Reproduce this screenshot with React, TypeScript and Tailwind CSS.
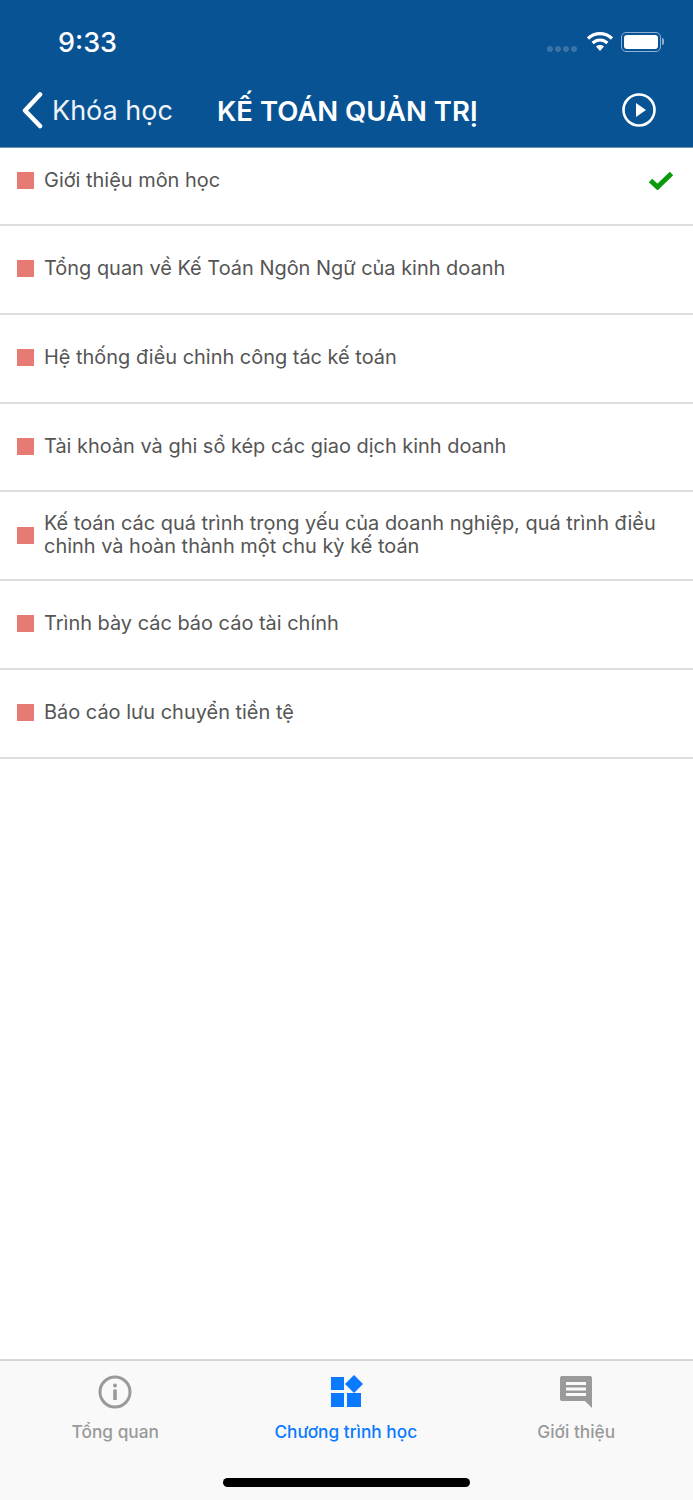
const lessons = [
  'Tổng quan về Kế Toán Ngôn Ngữ của kinh doanh',
  'Hệ thống điều chỉnh công tác kế toán',
  'Tài khoản và ghi sổ kép các giao dịch kinh doanh',
  'Kế toán các quá trình trọng yếu của doanh nghiệp, quá trình điều chỉnh và hoàn thành một chu kỳ kế toán',
  'Trình bày các báo cáo tài chính',
  'Báo cáo lưu chuyển tiền tệ',
];

function StatusIcons() {
  return (
    <div className="flex items-center -mt-[2px]">
      <div className="flex gap-[2px] mt-[15px] mr-[9px]">
        <span className="w-[6px] h-[6px] rounded-full bg-[#3d72a6]" />
        <span className="w-[6px] h-[6px] rounded-full bg-[#3d72a6]" />
        <span className="w-[6px] h-[6px] rounded-full bg-[#3d72a6]" />
        <span className="w-[6px] h-[6px] rounded-full bg-[#3d72a6]" />
      </div>
      <svg width="28" height="21" viewBox="0 0 28 21" className="mr-[7px]">
        <path d="M2 7.5C9 1 19 1 26 7.5" fill="none" stroke="#fff" strokeWidth="3.2" />
        <path d="M6.6 12C11 8 17 8 21.4 12" fill="none" stroke="#fff" strokeWidth="3.2" />
        <path d="M10 15.5C12.5 13.6 15.5 13.6 18 15.5L14 20Z" fill="#fff" />
      </svg>
      <div className="w-[40px] h-[20px] rounded-[5px] border border-[#8fb0d0] p-[2px]">
        <div className="w-full h-full rounded-[3px] bg-white" />
      </div>
      <div className="w-[2px] h-[7px] ml-[1px] rounded-r-full bg-[#8fb0d0]" />
    </div>
  );
}

function Row({ text, done, first }: { text: string; done?: boolean; first?: boolean }) {
  return (
    <div
      className={`flex items-center pl-[17px] pr-[19px] border-b-2 border-[#dedede] ${
        first ? 'h-[78px] pb-[12px]' : 'h-[88.75px] pb-[1px]'
      }`}
    >
      <span className="w-[17px] h-[17px] shrink-0 bg-[#e77b73] mr-[10px]" />
      <span className="flex-1 text-[19.95px] leading-[23px] text-[#555555]">{text}</span>
      {done && (
        <svg width="26" height="20" viewBox="0 0 26 20" className="shrink-0">
          <path d="M2.5 10.5L9.5 17L23.5 3.5" fill="none" stroke="#0a9a0a" strokeWidth="5" />
        </svg>
      )}
    </div>
  );
}

function Tab({ label, active, children }: { label: string; active?: boolean; children: React.ReactNode }) {
  return (
    <div className="flex flex-col items-center w-[230.5px]">
      <div className="h-[34px] flex items-center justify-center">{children}</div>
      <span className={`mt-[12px] text-[17.3px] leading-[22px] font-medium ${active ? 'text-[#0a7aff]' : 'text-[#9a9a9a]'}`}>
        {label}
      </span>
    </div>
  );
}

export default function App() {
  return (
    <div className="w-[693px] h-[1500px] flex flex-col bg-white font-['Inter',sans-serif]">
      <header className="h-[148px] shrink-0 bg-[#085394] border-b border-[#6f93b5] text-white">
        <div className="flex items-center justify-between pl-[58px] pr-[29px] pt-[23px] h-[62px]">
          <span className="text-[27px] leading-[36px] font-medium">9:33</span>
          <StatusIcons />
        </div>
        <div className="relative flex items-center justify-between pl-[21px] pr-[37px] mt-[23px] h-[50px]">
          <div className="flex items-center gap-[8px]">
            <svg width="23" height="38" viewBox="0 0 23 38">
              <path d="M19 3.5L4 19.5L19 35" fill="none" stroke="#fff" strokeWidth="4.6" strokeLinecap="round" strokeLinejoin="round" />
            </svg>
            <span className="mt-[2px] text-[27px] leading-[34px] text-[#eef3f8]">Khóa học</span>
          </div>
          <span className="absolute left-[217px] top-[9px] text-[27.5px] leading-[34px] font-semibold">KẾ TOÁN QUẢN TRỊ</span>
          <svg width="34" height="34" viewBox="0 0 34 34">
            <circle cx="17" cy="17" r="15.5" fill="none" stroke="#fff" strokeWidth="2.6" />
            <path d="M14 10L24 17L14 24Z" fill="#fff" />
          </svg>
        </div>
      </header>

      <main className="flex-1">
        <Row text="Giới thiệu môn học" done first />
        {lessons.map((t) => (
          <Row key={t} text={t} />
        ))}
      </main>

      <footer className="h-[141px] shrink-0 bg-[#f9f9f9] border-t-2 border-[#d6d6d6]">
        <div className="flex pt-[14px]">
          <Tab label="Tổng quan">
            <svg width="34" height="34" viewBox="0 0 34 34">
              <circle cx="17" cy="17" r="15" fill="none" stroke="#9a9a9a" strokeWidth="3" />
              <circle cx="17" cy="10.5" r="2" fill="#9a9a9a" />
              <rect x="15.2" y="14.5" width="3.6" height="10.5" fill="#9a9a9a" />
            </svg>
          </Tab>
          <Tab label="Chương trình học" active>
            <svg width="34" height="34" viewBox="0 0 34 34">
              <rect x="2" y="2" width="13" height="13" fill="#0a7aff" />
              <rect x="2" y="18" width="13" height="14" fill="#0a7aff" />
              <rect x="18" y="18" width="14" height="14" fill="#0a7aff" />
              <path d="M25 0L34 9L25 18L16 9Z" fill="#0a7aff" />
            </svg>
          </Tab>
          <Tab label="Giới thiệu">
            <svg width="34" height="34" viewBox="0 0 34 34">
              <path d="M3 1H31Q33 1 33 3V33L26 26H3Q1 26 1 24V3Q1 1 3 1Z" fill="#9a9a9a" />
              <rect x="7" y="7" width="20" height="3" fill="#f9f9f9" />
              <rect x="7" y="12.5" width="20" height="3" fill="#f9f9f9" />
              <rect x="7" y="18" width="20" height="3" fill="#f9f9f9" />
            </svg>
          </Tab>
        </div>
        <div className="w-[247px] h-[9px] mx-auto mt-[35px] rounded-full bg-black" />
      </footer>
    </div>
  );
}
